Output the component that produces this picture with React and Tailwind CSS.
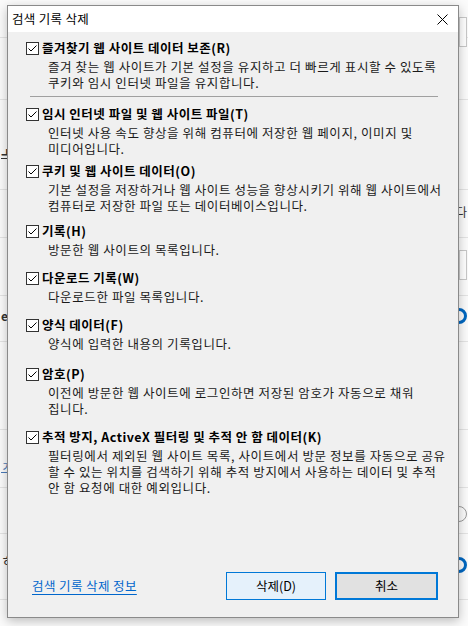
import React from 'react';

const FONT = { fontFamily: '"Noto Sans CJK KR", "Noto Sans", sans-serif' };

// items of the dialog, with the gap above each one
const items = [
  {
    label: '즐겨찾기 웹 사이트 데이터 보존(R)',
    desc: ['즐겨 찾는 웹 사이트가 기본 설정을 유지하고 더 빠르게 표시할 수 있도록', '쿠키와 임시 인터넷 파일을 유지합니다.'],
    gap: 'mt-[6px]',
  },
  {
    label: '임시 인터넷 파일 및 웹 사이트 파일(T)',
    desc: ['인터넷 사용 속도 향상을 위해 컴퓨터에 저장한 웹 페이지, 이미지 및', '미디어입니다.'],
    gap: 'mt-[7px]',
  },
  {
    label: '쿠키 및 웹 사이트 데이터(O)',
    desc: ['기본 설정을 저장하거나 웹 사이트 성능을 향상시키기 위해 웹 사이트에서', '컴퓨터로 저장한 파일 또는 데이터베이스입니다.'],
    gap: 'mt-[4px]',
  },
  { label: '기록(H)', desc: ['방문한 웹 사이트의 목록입니다.'], gap: 'mt-[7px]' },
  { label: '다운로드 기록(W)', desc: ['다운로드한 파일 목록입니다.'], gap: 'mt-[10px]' },
  { label: '양식 데이터(F)', desc: ['양식에 입력한 내용의 기록입니다.'], gap: 'mt-[10px]' },
  {
    label: '암호(P)',
    desc: ['이전에 방문한 웹 사이트에 로그인하면 저장된 암호가 자동으로 채워', '집니다.'],
    gap: 'mt-[12px]',
  },
  {
    label: '추적 방지, ActiveX 필터링 및 추적 안 함 데이터(K)',
    desc: [
      '필터링에서 제외된 웹 사이트 목록, 사이트에서 방문 정보를 자동으로 공유',
      '할 수 있는 위치를 검색하기 위해 추적 방지에서 사용하는 데이터 및 추적',
      '안 함 요청에 대한 예외입니다.',
    ],
    gap: 'mt-[10px]',
  },
];

// strips of the settings page that peek out around the dialog
const bgRows = [
  { h: 'h-[38px]', left: null, right: <div className="w-[8px] h-[30px] mt-[17px] border border-[#c8c8c8] bg-white" /> },
  { h: 'h-[62px]', left: null, right: null },
  { h: 'h-[90px]', left: <div className="mt-[44px] text-[13px] font-bold text-[#333] underline leading-[16px]">ㅗ</div>, right: null },
  { h: 'h-[48px]', left: null, right: <div className="mt-[14px] text-[12px] text-[#333] leading-[16px]">다</div> },
  { h: 'h-[58px]', left: null, right: <div className="w-[8px] h-[30px] mt-[12px] border border-[#c8c8c8] bg-white" /> },
  { h: 'h-[46px]', left: <div className="mt-[12px] text-[12px] font-bold text-[#333] leading-[16px]">er</div>, right: <div className="mt-[12px] w-[16px] h-[16px] rounded-full border-[3px] border-[#0067c0]" /> },
  { h: 'h-[88px]', left: null, right: null },
  { h: 'h-[58px]', left: <div className="mt-[28px] text-[13px] text-[#4a7ab8] underline leading-[16px]">ㅈ</div>, right: null },
  { h: 'h-[46px]', left: null, right: <div className="mt-[18px] w-[16px] h-[16px] rounded-full border border-[#999]" /> },
  { h: 'h-[66px]', left: <div className="mt-[18px] text-[13px] text-[#333] leading-[16px]">ㅎ</div>, right: <div className="mt-[23px] w-[16px] h-[16px] rounded-full border-[3px] border-[#0067c0]" /> },
];

const CheckBox = () => (
  <svg width="13" height="13" viewBox="0 0 13 13" className="shrink-0">
    <rect x="0.5" y="0.5" width="12" height="12" fill="#fff" stroke="#333" />
    <path d="M2.5 6.5 L5 9 L10.5 3.5" fill="none" stroke="#000" strokeWidth="1" />
  </svg>
);

const Item = ({ item, first }) => (
  <div className={item.gap}>
    <div className="flex items-center h-[20px] gap-[3px]">
      <CheckBox />
      <span className="font-bold text-[12.5px] tracking-[0.5px] text-black leading-[20px] whitespace-nowrap">{item.label}</span>
    </div>
    <div className="mt-[1px] pl-[22px] text-[12.5px] tracking-[0.6px] leading-[16px] text-[#1a1a1a]">
      {item.desc.map((d, i) => (
        <div key={i} className="whitespace-nowrap">{d}</div>
      ))}
    </div>
    {first && <div className="mt-[5px] ml-[4px] mr-[14px] h-px bg-[#a0a0a0]" />}
  </div>
);

export default function App() {
  return (
    <div className="relative w-[468px] h-[626px] bg-[#fbfbfb] overflow-hidden" style={FONT}>
      {/* page behind the dialog */}
      <div className="flex flex-col">
        {bgRows.map((r, i) => (
          <div key={i} className={`${r.h} flex justify-between items-start border-b border-[#e4e4e4] pl-[1px] pr-[1px]`}>
            <div>{r.left}</div>
            <div>{r.right}</div>
          </div>
        ))}
      </div>

      {/* dialog */}
      <div className="absolute left-[7px] top-[5px] w-[452px] h-[613px] border border-[#8a8a8a] bg-[#f0f0f0] flex flex-col shadow-[0_3px_10px_rgba(0,0,0,0.25)]">
        <div className="h-[26px] bg-white flex items-center justify-between shrink-0">
          <span className="pl-[4px] text-[12.5px] tracking-[0.3px] text-black">검색 기록 삭제</span>
          <svg width="11" height="11" viewBox="0 0 11 11" className="mr-[10px]">
            <path d="M0.5 0.5 L10.5 10.5 M10.5 0.5 L0.5 10.5" stroke="#000" strokeWidth="1" />
          </svg>
        </div>

        <div className="flex-1 pl-[18px] pr-[6px]">
          {items.map((item, i) => (
            <Item key={i} item={item} first={i === 0} />
          ))}
        </div>

        <div className="flex items-center h-[28px] mb-[17px] shrink-0">
          <span className="ml-[24px] text-[12.5px] tracking-[0.4px] text-[#0066cc] underline underline-offset-[3px]">검색 기록 삭제 정보</span>
          <div className="flex-1" />
          <button className="w-[100px] h-[28px] border border-[#0078d7] bg-[#e5f1fb] text-[12.5px] text-black">삭제(D)</button>
          <button className="ml-[9px] mr-[20px] w-[103px] h-[28px] border-2 border-[#0078d7] bg-[#e1e1e1] text-[12.5px] text-black">취소</button>
        </div>
      </div>
    </div>
  );
}
